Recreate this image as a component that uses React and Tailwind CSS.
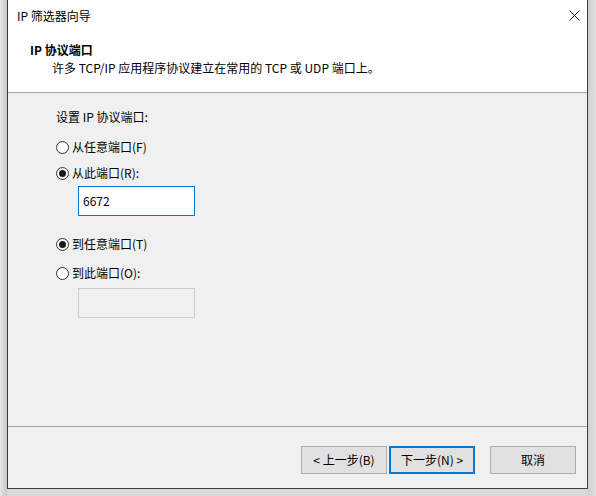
export default function App() {
  const font = { fontFamily: '"Noto Sans CJK SC", "Noto Sans", sans-serif' };
  const Radio = ({ checked, label }) => (
    <div className="flex items-center h-[16px]">
      <div className="w-[13px] h-[13px] rounded-full border border-[#333333] bg-white flex items-center justify-center">
        {checked && <div className="w-[7px] h-[7px] rounded-full bg-[#1a1a1a]" />}
      </div>
      <span className="ml-[3px] text-[12px] leading-[16px] text-black">{label}</span>
    </div>
  );
  return (
    <div className="w-[596px] h-[496px] bg-[#d9d9d9] flex overflow-hidden" style={font}>
      <div className="w-[7px] h-full bg-gradient-to-r from-[#e6e6e6] to-[#c8c8c8]" />
      <div className="w-[581px] h-[489px] border border-t-0 border-[#3c3c3c] bg-[#f0f0f0] flex flex-col">
        <div className="h-[31px] bg-white flex items-center justify-between pl-[9px] pr-[7px]">
          <span className="text-[12px] leading-[16px] text-black">IP 筛选器向导</span>
          <svg width="11" height="11" viewBox="0 0 11 11">
            <path d="M0.5 0.5 L10.5 10.5 M10.5 0.5 L0.5 10.5" stroke="#111" strokeWidth="1" />
          </svg>
        </div>
        <div className="h-[61px] bg-white pt-[11px]">
          <div className="pl-[22px] text-[12px] leading-[16px] font-bold text-black">IP 协议端口</div>
          <div className="pl-[44px] mt-[2px] text-[12px] leading-[16px] text-black">
            许多 TCP/IP 应用程序协议建立在常用的 TCP 或 UDP 端口上。
          </div>
        </div>
        <div className="h-px bg-[#a0a0a0]" />
        <div className="flex-1 pl-[48px] pt-[16px]">
          <div className="text-[12px] leading-[16px] text-black">设置 IP 协议端口:</div>
          <div className="mt-[14px]">
            <Radio label="从任意端口(F)" />
          </div>
          <div className="mt-[10px]">
            <Radio checked label="从此端口(R):" />
          </div>
          <div className="mt-[5px] ml-[22px] w-[117px] h-[30px] border border-[#0078d7] bg-white flex items-center pl-[4px] text-[12px] text-black">
            6672
          </div>
          <div className="mt-[20px]">
            <Radio checked label="到任意端口(T)" />
          </div>
          <div className="mt-[13px]">
            <Radio label="到此端口(O):" />
          </div>
          <div className="mt-[7px] ml-[22px] w-[117px] h-[30px] border border-[#cccccc] bg-[#f0f0f0]" />
        </div>
        <div className="h-px bg-[#a0a0a0]" />
        <div className="h-[61px] flex justify-end items-start pt-[19px] pr-[11px]">
          <button className="w-[86px] h-[28px] bg-[#e1e1e1] border border-[#adadad] text-[12px] text-black">
            &lt; 上一步(B)
          </button>
          <button className="ml-[2px] w-[86px] h-[28px] bg-[#e1e1e1] border-2 border-[#0078d7] text-[12px] text-black">
            下一步(N) &gt;
          </button>
          <button className="ml-[15px] w-[86px] h-[28px] bg-[#e1e1e1] border border-[#adadad] text-[12px] text-black">
            取消
          </button>
        </div>
      </div>
      <div className="flex-1 h-full bg-gradient-to-r from-[#cfcfcf] to-[#e2e2e2]" />
    </div>
  );
}
